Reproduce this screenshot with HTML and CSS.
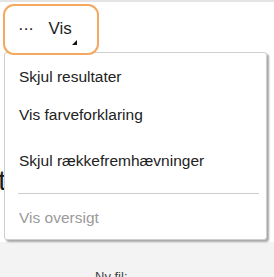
FILE: index.html
```html
<!DOCTYPE html>
<html lang="da">
<head>
    <meta charset="UTF-8">
    <title>Vis</title>
    <link rel="stylesheet" href="styles.css">
</head>
<body>
    <div class="topline"></div>
    <div class="page">
        <div class="toolbar">
            <button class="view-button">
                <span class="dots">&middot;&middot;&middot;</span>
                <span class="label">Vis</span>
                <span class="corner"></span>
            </button>
        </div>
        <div class="heading"><span>Resultat</span></div>

        <div class="menu">
            <div class="menu-item">Skjul resultater</div>
            <div class="menu-item second">Vis farveforklaring</div>
            <div class="menu-item third">Skjul rækkefremhævninger</div>
            <div class="separator"></div>
            <div class="menu-item disabled">Vis oversigt</div>
        </div>
    </div>
    <div class="footer">
        <span class="new-file">Ny fil:</span>
    </div>
</body>
</html>
```

FILE: styles.css
```css
body {
    margin: 0;
    font-family: "Liberation Sans", Arial, sans-serif;
    background: #f3f3f3;
    overflow: hidden;
}

.topline {
    height: 2px;
    background: #e4e4e4;
}

.page {
    position: relative;
    background: #fff;
    height: 240px;
}

.toolbar {
    padding: 2px 0 0 3px;
}

.view-button {
    position: relative;
    z-index: 2;
    width: 96px;
    height: 51px;
    border: 2.5px solid #f5a85f;
    border-radius: 11px;
    background: #fff;
    padding: 0 0 0 13px;
    display: flex;
    align-items: center;
    font-family: inherit;
    cursor: pointer;
}

.dots {
    font-size: 17px;
    color: #222;
    letter-spacing: -0.5px;
    margin-top: -1px;
}

.label {
    font-size: 17px;
    color: #1f1f1f;
    margin-left: 15px;
    margin-top: -1px;
}

.corner {
    position: absolute;
    left: 67px;
    top: 34px;
    width: 0;
    height: 0;
    border-left: 5px solid transparent;
    border-bottom: 5px solid #111;
}

.heading {
    display: flex;
    justify-content: flex-end;
    width: 6px;
    margin-top: 110px;
    font-size: 28px;
    color: #1a1a1a;
    white-space: nowrap;
}

.menu {
    position: absolute;
    z-index: 1;
    left: 4px;
    top: 50px;
    width: 261px;
    height: 186px;
    background: #fff;
    border: 1px solid #cfcfcf;
    border-radius: 3px;
    box-shadow: 2px 2px 2px rgba(0, 0, 0, 0.35);
    font-size: 15.5px;
    color: #222;
}

.menu-item {
    padding: 15px 0 0 14px;
    line-height: 18px;
}

.menu-item.second {
    padding-top: 20px;
}

.menu-item.third {
    padding-top: 28px;
}

.separator {
    height: 1px;
    background: #cdcdcd;
    margin: 23px 7px 0 13px;
}

.menu-item.disabled {
    color: #9a9a9a;
    padding-top: 15px;
}

.footer {
    padding: 25px 0 0 95px;
}

.new-file {
    font-size: 13px;
    color: #444;
}
```
